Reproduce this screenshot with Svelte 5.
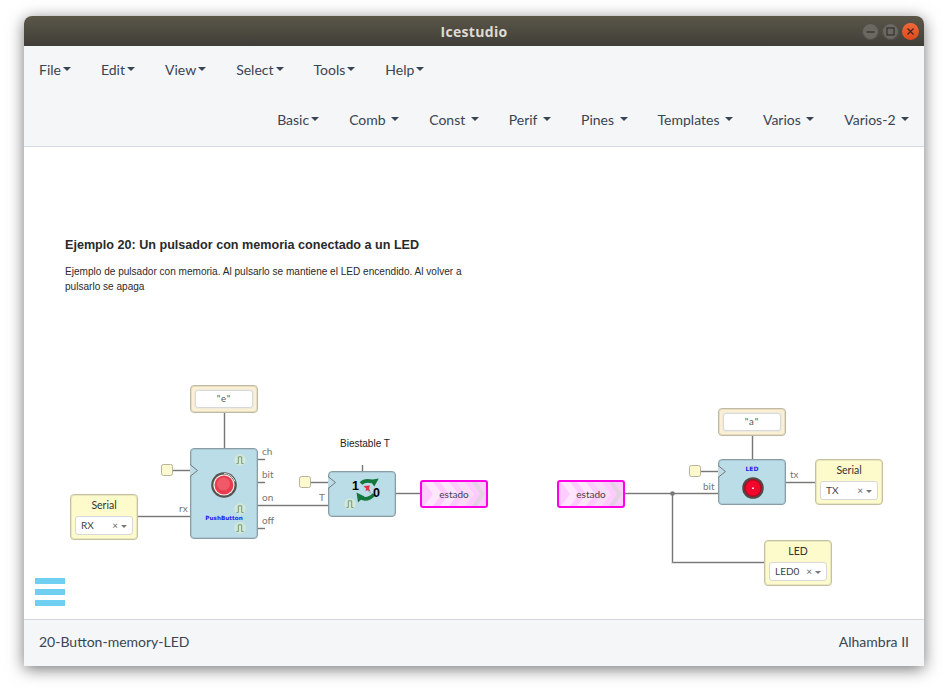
<script>
	const topMenu = ['File', 'Edit', 'View', 'Select', 'Tools', 'Help'];
	const blockMenu = ['Basic', 'Comb', 'Const', 'Perif', 'Pines', 'Templates', 'Varios', 'Varios-2'];

	// wires and nodes use page coordinates, the canvas starts at 24,147
	const box = (x, y, w, h) => `left:${x - 24}px;top:${y - 147}px;width:${w}px;height:${h}px`;
	const at = (x, y) => `left:${x - 24}px;top:${y - 147}px`;

	const wires = [
		'M224.5 413V448',
		'M173 470.5H190',
		'M138 516.5H190',
		'M258 459.5H265',
		'M258 482.5H265',
		'M258 505.5H328',
		'M258 528.5H265',
		'M362.5 465V471',
		'M311 482.5H328',
		'M396 493.5H420',
		'M625 493.5H718',
		'M672.5 493.5V562.5H764',
		'M752.5 436V459',
		'M701 471.5H718',
		'M786 482.5H815'
	];

	const ports = [
		['ch', 262, 445], ['bit', 262, 468], ['on', 262, 491], ['off', 262, 514],
		['rx', 179, 502], ['T', 319, 491], ['tx', 790, 468], ['bit', 703, 480]
	];

	const constants = [['"e"', 190, 385], ['"a"', 718, 408]];
	const inputs = [
		['Serial', 'RX', 70, 494, 46],
		['Serial', 'TX', 815, 459, 46],
		['LED', 'LED0', 764, 540, 46]
	];
	const clocks = [[161, 464], [299, 476], [689, 465]];
	const pulses = [[240, 460], [240, 509], [240, 528], [350, 504]];
	const labels = [[420, 480], [557, 480]];
</script>

<div class="page">
	<div class="window">
		<header class="titlebar">
			<span class="title">Icestudio</span>
			<div class="controls">
				<span class="ctl">
					<svg width="17" height="17" viewBox="0 0 17 17"><path d="M4.500 9h8" stroke="#2e2d29" stroke-width="1.200" /></svg>
				</span>
				<span class="ctl">
					<svg width="17" height="17" viewBox="0 0 17 17"><rect x="5" y="5" width="7" height="7" fill="none" stroke="#2e2d29" stroke-width="1.100" /></svg>
				</span>
				<span class="ctl close">
					<svg width="17" height="17" viewBox="0 0 17 17"><path d="M5.500 5.500l6 6M11.500 5.500l-6 6" stroke="#40251a" stroke-width="1.200" /></svg>
				</span>
			</div>
		</header>

		<nav class="menus">
			<ul class="row first">
				{#each topMenu as item}
					<li>{item}<i class="caret"></i></li>
				{/each}
			</ul>
			<ul class="row second">
				{#each blockMenu as item, i}
					<li class:spaced={i > 0}>{item}<i class="caret"></i></li>
				{/each}
			</ul>
		</nav>

		<main class="canvas">
			<div class="comment">
				<h1>Ejemplo 20: Un pulsador con memoria conectado a un LED</h1>
				<p>Ejemplo de pulsador con memoria. Al pulsarlo se mantiene el LED encendido. Al volver a pulsarlo se apaga</p>
			</div>

			<svg class="wires" width="900" height="472" viewBox="24 147 900 472">
				{#each wires as d}
					<path {d} fill="none" stroke="#d8d8d8" stroke-width="2.500" />
					<path {d} fill="none" stroke="#777" stroke-width="1" />
				{/each}
				<circle cx="672.500" cy="493.500" r="2.300" fill="#777" />
			</svg>

			{#each constants as [text, x, y]}
				<div class="constant" style={box(x, y, 68, 28)}>
					<div class="value">{text}</div>
				</div>
			{/each}

			{#each inputs as [name, pin, x, y, h]}
				<div class="pin" style={box(x, y, 68, h)}>
					<div class="pin-name">{name}</div>
					<div class="select">
						<span>{pin}</span>
						<span class="clear">×</span>
						<i class="mini-caret"></i>
					</div>
				</div>
			{/each}

			{#each clocks as [x, y]}
				<div class="clock" style={box(x, y, 12, 12)}></div>
			{/each}

			<div class="block" style={box(190, 448, 68, 91)}>
				<span class="block-title push-title">PushButton</span>
				<svg class="button-icon" width="26" height="26" viewBox="0 0 26 26">
					<circle cx="13" cy="13" r="12.800" fill="#57534f" />
					<path d="M13 1.500a11.500 11.500 0 0 1 11 8" fill="none" stroke="#ddd" stroke-width="1" />
					<circle cx="13" cy="13" r="10.600" fill="#f3f0ee" />
					<circle cx="13" cy="13" r="9.400" fill="#e93a4e" />
					<circle cx="12.500" cy="12" r="6.500" fill="#f05a68" />
				</svg>
			</div>

			<div class="block" style={box(328, 471, 68, 46)}>
				<svg class="toggle-icon" width="24" height="26" viewBox="0 0 24 26">
					<path d="M5 5.500C8 2.500 12 2.500 16 3.500" fill="none" stroke="#14773c" stroke-width="3.600" />
					<path d="M22.800 .5L18.300 8.500L13.500 2Z" fill="#14773c" />
					<path d="M4.500 19.500C8 21.500 13 21.500 18 16.500" fill="none" stroke="#14773c" stroke-width="3.600" />
					<path d="M.5 14.500L8.500 18.500L2 24.500Z" fill="#14773c" />
					<path d="M7.500 8L14 7.500L13 10.500L14.500 13.500L11 12L9.500 13.500L10 10.500Z" fill="#e2304a" />
					<path d="M11.500 12L15 15.500" stroke="#999" stroke-width="1" />
				</svg>
				<span class="bit one">1</span>
				<span class="bit zero">0</span>
			</div>

			<div class="block" style={box(718, 459, 68, 46)}>
				<span class="block-title led-title">LED</span>
				<svg class="led-icon" width="22" height="22" viewBox="0 0 22 22">
					<circle cx="11" cy="11" r="10.800" fill="#4e4a4a" />
					<circle cx="11" cy="11" r="9" fill="#a80f22" />
					<circle cx="11" cy="11" r="7.400" fill="#f4052c" />
					<rect x="10" y="10.500" width="2" height="1.500" fill="#ffd5da" />
				</svg>
			</div>

			{#each [[190, 464], [328, 476], [718, 465]] as [x, y]}
				<svg class="chevron" style={at(x, y)} width="9" height="13" viewBox="0 0 9 13">
					<path d="M0 .5L7.500 6.500L0 12.500" fill="#bcdce8" stroke="#777" stroke-width="1" />
				</svg>
			{/each}

			{#each pulses as [x, y]}
				<svg class="pulse" style={at(x - 6, y - 6)} width="12" height="12" viewBox="0 0 12 12">
					<circle cx="6" cy="6" r="5.700" fill="#d5e8d8" />
					<path d="M2.500 9.500H4.300V2.800H7.700V9.500H9.500" fill="none" stroke="#6f9c7a" stroke-width="1" />
				</svg>
			{/each}

			{#each labels as [x, y]}
				<div class="label" style={box(x, y, 68, 28)}>
					<svg width="64" height="24" viewBox="0 0 64 24">
						<path d="M2 0h9l9 12-9 12H2l9-12z" fill="#ffe6ff" />
						<path d="M18 0h9l9 12-9 12h-9l9-12z" fill="#ffe6ff" />
						<path d="M34 0h9l9 12-9 12h-9l9-12z" fill="#f8dcf8" />
						<path d="M50 0h5l8 12-8 12h-5l8-12z" fill="#e2d2e2" />
					</svg>
					<span>estado</span>
				</div>
			{/each}

			{#each ports as [text, x, y]}
				<span class="port" style={at(x, y)}>{text}</span>
			{/each}

			<span class="block-name" style={box(325, 436, 80, 15)}>Biestable T</span>

			<div class="burger"><i></i><i></i><i></i></div>
		</main>

		<footer class="status">
			<span>20-Button-memory-LED</span>
			<span>Alhambra II</span>
		</footer>
	</div>
</div>

<style>
	:global(body) {
		background: #fff;
		overflow: hidden;
	}

	.page {
		height: 689px;
		box-sizing: border-box;
		padding: 16px 22px 23px 24px;
	}

	.window {
		width: 900px;
		height: 650px;
		display: flex;
		flex-direction: column;
		border-radius: 8px 8px 0 0;
		box-shadow: 0 3px 16px rgba(0, 0, 0, 0.55);
		background: #fff;
		font-family: Lato, "Liberation Sans", sans-serif;
		color: #3a4452;
	}

	.titlebar {
		height: 30px;
		flex: none;
		position: relative;
		display: flex;
		align-items: center;
		justify-content: center;
		background: linear-gradient(#5a5648, #403e38);
		border-radius: 8px 8px 0 0;
	}

	.title {
		font-family: "Open Sans", sans-serif;
		font-weight: 700;
		font-size: 14px;
		letter-spacing: 0.3px;
		color: #dfdbd2;
	}

	.controls {
		position: absolute;
		right: 5px;
		top: 6.500px;
		display: flex;
		gap: 3px;
	}

	.ctl {
		width: 17px;
		height: 17px;
		border-radius: 50%;
		background: #6a6860;
		box-shadow: inset 0 0 0 1px #4d4b45;
		display: block;
	}

	.ctl svg { display: block; }

	.close {
		background: linear-gradient(#f0683a, #dc4a1d);
		box-shadow: none;
	}

	.menus {
		height: 101px;
		flex: none;
		box-sizing: border-box;
		background: #f4f6f8;
		border-bottom: 1px solid #d5dbe3;
	}

	.row {
		list-style: none;
		margin: 0 0 4px;
		padding: 0;
		display: flex;
		height: 46px;
		align-items: center;
		font-size: 14px;
	}

	.first {
		padding-left: 15px;
		gap: 30px;
	}

	.second {
		justify-content: flex-end;
		padding-right: 15px;
		gap: 30px;
	}

	.row li {
		display: flex;
		align-items: center;
	}

	.caret {
		width: 0;
		height: 0;
		margin-left: 2px;
		border: 4px solid transparent;
		border-top-color: #3a4452;
		border-bottom: 0;
	}

	.spaced .caret { margin-left: 5.500px; }

	.canvas {
		flex: 1;
		position: relative;
		background: #fff;
		overflow: hidden;
	}

	.comment {
		position: absolute;
		left: 41px;
		top: 89px;
		width: 410px;
		font-family: "Liberation Sans", sans-serif;
		color: #2a2a2a;
	}

	.comment h1 {
		margin: 0 0 10px;
		font-size: 12.600px;
		line-height: 18px;
		font-weight: 700;
	}

	.comment p {
		margin: 0;
		font-size: 10.070px;
		line-height: 15px;
	}

	.wires {
		position: absolute;
		left: 0;
		top: 0;
	}

	.constant {
		position: absolute;
		box-sizing: border-box;
		background: #fbf0d4;
		border: 1px solid #bfb9a5;
		box-shadow: inset 0 0 0 1px #e6dcc0;
		border-radius: 4px;
		padding: 3.500px 4px 4px;
	}

	.value {
		height: 100%;
		box-sizing: border-box;
		background: #fff;
		border: 1px solid #d8d8d8;
		box-shadow: 0 0 0 1px #eeeade;
		border-radius: 3px;
		text-align: center;
		font-size: 9.500px;
		letter-spacing: 1px;
		line-height: 16px;
		color: #555;
	}

	.pin {
		position: absolute;
		box-sizing: border-box;
		background: #fdfbcb;
		border: 1px solid #c4c2a2;
		box-shadow: inset 0 0 0 1px #e9e7bd;
		border-radius: 4px;
		padding: 3px 4px;
		text-align: center;
	}

	.pin-name {
		font-size: 10.500px;
		line-height: 15px;
		color: #333;
		margin-bottom: 3px;
	}

	.select {
		height: 19px;
		box-sizing: border-box;
		background: #fff;
		border: 1px solid #d8d8d8;
		border-radius: 3px;
		display: flex;
		align-items: center;
		padding: 0 5px 2px;
		font-size: 10px;
		color: #444;
	}

	.select span:first-child { flex: 1; text-align: left; }

	.clear {
		font-size: 10px;
		color: #666;
		margin: 0 3px 0 0;
	}

	.mini-caret {
		width: 0;
		height: 0;
		margin-top: 4px;
		border: 3px solid transparent;
		border-top-color: #777;
		border-bottom: 0;
	}

	.clock {
		position: absolute;
		box-sizing: border-box;
		background: #fdf9cf;
		border: 1px solid #b5b39b;
		border-radius: 2.500px;
	}

	.block {
		position: absolute;
		box-sizing: border-box;
		background: #bbdde8;
		border: 1px solid #8a9da5;
		box-shadow: inset 0 0 0 1px #aac9d3;
		border-radius: 4px;
	}

	.block-title {
		position: absolute;
		left: 0;
		right: 0;
		text-align: center;
		font-family: "DejaVu Sans", sans-serif;
		font-weight: 700;
		font-size: 5.700px;
		color: #2222ee;
	}

	.push-title { top: 66px; }
	.led-title { top: 5px; font-size: 6px; }

	.button-icon {
		position: absolute;
		left: 20px;
		top: 22.500px;
	}

	.led-icon {
		position: absolute;
		left: 23px;
		top: 17px;
	}

	.toggle-icon {
		position: absolute;
		left: 27px;
		top: 6px;
	}

	.bit {
		position: absolute;
		font-family: "Liberation Sans", sans-serif;
		font-weight: 700;
		font-size: 12.500px;
		line-height: 16px;
		color: #000;
	}

	.one { left: 23px; top: 6px; }
	.zero { left: 44px; top: 12.500px; }

	.chevron, .pulse {
		position: absolute;
	}

	.label {
		position: absolute;
		box-sizing: border-box;
		background: #ffccff;
		border: 2px solid #ff00e6;
		border-radius: 3px;
		display: flex;
		align-items: center;
		justify-content: center;
		padding-bottom: 1px;
		font-size: 10px;
		color: #444;
	}

	.label svg {
		position: absolute;
		left: 0;
		top: 0;
	}

	.label span { position: relative; }

	.port {
		position: absolute;
		font-size: 10px;
		line-height: 12px;
		color: #777;
	}

	.block-name {
		position: absolute;
		text-align: center;
		font-family: "Liberation Sans", sans-serif;
		font-size: 10px;
		line-height: 15px;
		color: #222;
	}

	.burger {
		position: absolute;
		left: 11px;
		top: 431px;
		width: 30px;
		display: flex;
		flex-direction: column;
		gap: 5px;
	}

	.burger i {
		display: block;
		height: 6px;
		background: #6ecff0;
	}

	.status {
		height: 47px;
		flex: none;
		box-sizing: border-box;
		background: #f4f6f8;
		border-top: 1px solid #d5d8dc;
		display: flex;
		align-items: center;
		justify-content: space-between;
		padding: 0 15px 3px;
		font-size: 14px;
	}
</style>
